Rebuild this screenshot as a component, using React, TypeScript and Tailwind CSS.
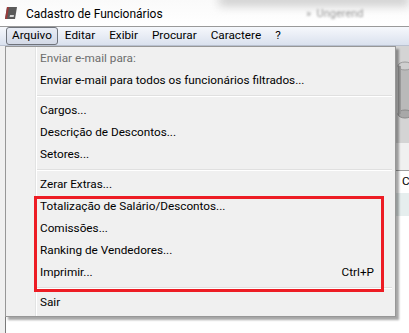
import React from "react";

type Item =
  | { kind: "item"; label: string; disabled?: boolean; shortcut?: string }
  | { kind: "sep" };

const items: Item[] = [
  { kind: "item", label: "Enviar e-mail para:", disabled: true },
  { kind: "item", label: "Enviar e-mail para todos os funcionários filtrados..." },
  { kind: "sep" },
  { kind: "item", label: "Cargos..." },
  { kind: "item", label: "Descrição de Descontos..." },
  { kind: "item", label: "Setores..." },
  { kind: "sep" },
  { kind: "item", label: "Zerar Extras..." },
  { kind: "item", label: "Totalização de Salário/Descontos..." },
  { kind: "item", label: "Comissões..." },
  { kind: "item", label: "Ranking de Vendedores..." },
  { kind: "item", label: "Imprimir...", shortcut: "Ctrl+P" },
  { kind: "sep" },
  { kind: "item", label: "Sair" },
];

const menus = ["Arquivo", "Editar", "Exibir", "Procurar", "Caractere", "?"];

const AppIcon = () => (
  <svg width="14" height="14" viewBox="0 0 14 14" className="shrink-0">
    <polygon points="3,1 13,1 11,13 1,13" fill="#5a5a5a" />
    <polygon points="3,1 5,1 3,13 1,13" fill="#9b3b3b" />
    <polygon points="6,9 10,9 9.6,11 5.6,11" fill="#d8d8d8" />
  </svg>
);

const Cylinder = () => (
  <svg width="14" height="58" viewBox="0 0 14 58">
    <rect x="3" y="4" width="14" height="50" fill="#b9b9b9" />
    <ellipse cx="10" cy="5" rx="7" ry="4" fill="#cfcfcf" stroke="#9a9a9a" />
    <ellipse cx="10" cy="53" rx="7" ry="4" fill="#a8a8a8" stroke="#8a8a8a" />
    <rect x="3" y="5" width="3" height="48" fill="#9c9c9c" />
  </svg>
);

export default function App() {
  return (
    <div
      className="relative w-[409px] h-[333px] overflow-hidden bg-white text-[11.75px] text-black"
      style={{ fontFamily: 'Roboto, "Noto Sans", sans-serif' }}
    >
      {/* title bar */}
      <div className="relative h-[26px] flex items-center gap-[8px] pl-[4px] bg-gradient-to-b from-[#fafafa] to-white">
        <AppIcon />
        <span className="text-[12px] pt-[1px]">Cadastro de Funcionários</span>
        <div className="absolute right-0 top-[-6px] w-[190px] h-[12px] bg-[#cfcfcf] blur-[5px]" />
        <span className="absolute left-[306px] top-[6px] text-[11px] text-[#9a9a9a] blur-[1.2px]">
          »&nbsp;&nbsp;Ungerend
        </span>
      </div>

      {/* menu bar */}
      <div className="h-[20px] flex items-center pl-[6px] border-t border-[#9a9a9a] border-b border-b-[#b9c1d0] bg-gradient-to-b from-[#f6f8fc] to-[#dae1ee]">
        {menus.map((m, i) => (
          <div
            key={m}
            className={
              i === 0
                ? "h-[18px] px-[5px] flex items-center rounded-[3px] border border-[#6f737b] bg-gradient-to-b from-[#e9edf5] to-[#d3d9e6]"
                : "h-[18px] px-[7px] flex items-center"
            }
          >
            {m}
          </div>
        ))}
      </div>

      {/* window body behind the open menu */}
      <div className="flex h-[287px]">
        <div className="w-[5px] bg-[#f0f0f0] border-r border-[#7a7a7a] box-content" />
        <div className="flex-1 flex flex-col">
          <div className="h-[97px] bg-[#d4d4d4] flex justify-end items-center pb-[10px]">
            <Cylinder />
          </div>
          <div className="h-[28px] bg-[#f0f0f0] border-b border-[#a0a0a0]" />
          <div className="h-[22px] flex justify-end items-center">
            <span className="w-[7px] overflow-hidden">C</span>
          </div>
          <div className="h-[23px] bg-[#e6eeee]" />
          <div className="flex-1 bg-white" />
        </div>
      </div>

      {/* dropdown menu */}
      <div className="absolute left-[5px] top-[46px] w-[391px] border border-[#979797] bg-[#f0f0f0] pt-[1px] pb-[2px] px-[1px] shadow-[3px_3px_2px_rgba(0,0,0,0.35)]">
        <div className="absolute left-[29px] top-0 bottom-0 w-[2px] border-l border-[#e2e3e3] border-r border-r-white" />
        {items.map((it, i) =>
          it.kind === "sep" ? (
            <div key={i} className="h-[8px] flex items-center pl-[30px] pr-[2px]">
              <div className="flex-1 h-[2px] border-t border-[#e0e0e0] border-b border-b-white" />
            </div>
          ) : (
            <div
              key={i}
              className={`relative h-[22px] flex items-center pl-[33px] pr-[20px] ${
                it.disabled ? "text-[#6d6d6d]" : "text-black"
              }`}
            >
              <span className="flex-1">{it.label}</span>
              {it.shortcut && <span>{it.shortcut}</span>}
            </div>
          )
        )}
        <div className="absolute left-[28px] top-[149px] w-[350px] h-[96px] border-[3px] border-[#ed1c24]" />
      </div>
    </div>
  );
}
